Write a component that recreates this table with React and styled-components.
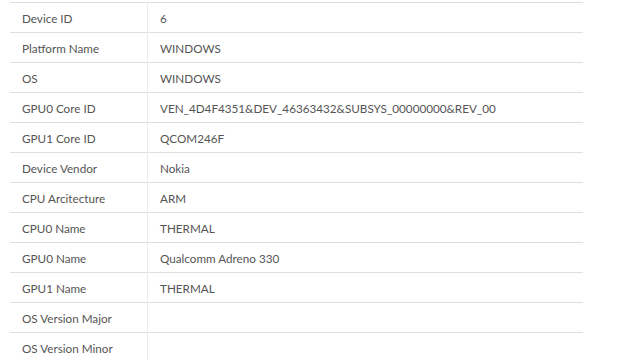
import styled, { createGlobalStyle } from 'styled-components';

const GlobalStyle = createGlobalStyle`
  body {
    margin: 0;
    background: #fff;
    font-family: Lato, "Open Sans", sans-serif;
  }
`;

const Wrapper = styled.div`
  padding: 2px 57px 0 10px;
`;

const Table = styled.table`
  width: 100%;
  border-collapse: collapse;
  font-size: 11.7px;
  color: #555;
`;

const Row = styled.tr`
  height: 30px;
  border-top: 1px solid #dedede;
`;

const Label = styled.td`
  width: 113px;
  padding: 0 12px;
  border-right: 1px solid #ececec;
`;

const Value = styled.td`
  padding: 0 12px;
`;

const rows = [
  ['Device ID', '6'],
  ['Platform Name', 'WINDOWS'],
  ['OS', 'WINDOWS'],
  ['GPU0 Core ID', 'VEN_4D4F4351&DEV_46363432&SUBSYS_00000000&REV_00'],
  ['GPU1 Core ID', 'QCOM246F'],
  ['Device Vendor', 'Nokia'],
  ['CPU Arcitecture', 'ARM'],
  ['CPU0 Name', 'THERMAL'],
  ['GPU0 Name', 'Qualcomm Adreno 330'],
  ['GPU1 Name', 'THERMAL'],
  ['OS Version Major', ''],
  ['OS Version Minor', ''],
];

const App = () => {
  return (
    <>
      <GlobalStyle />
      <Wrapper>
        <Table>
          <tbody>
            {rows.map(([label, value]) => (
              <Row key={label}>
                <Label>{label}</Label>
                <Value>{value}</Value>
              </Row>
            ))}
          </tbody>
        </Table>
      </Wrapper>
    </>
  );
};

export default App;
